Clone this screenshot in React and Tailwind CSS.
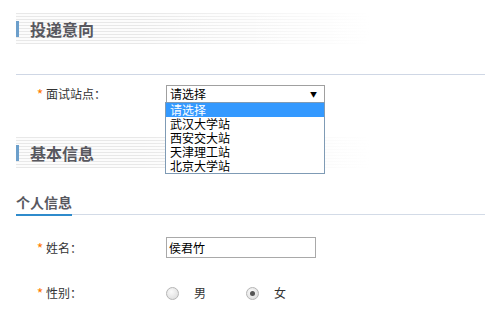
import React from "react";

const stripes =
  "bg-[linear-gradient(to_right,rgba(255,255,255,0)_35%,#fff_100%),repeating-linear-gradient(to_bottom,#e8e8e8_0px,#e8e8e8_1px,#fcfcfc_1px,#fcfcfc_3px)]";

const SectionTitle = ({ children }) => (
  <div className={`flex h-[31px] w-[355px] items-center ${stripes}`}>
    <span className="h-4 w-[3px] bg-[#6c9fcb]" />
    <span className="ml-[11px] text-base leading-none font-bold text-[#58585f]">
      {children}
    </span>
  </div>
);

const Label = ({ children }) => (
  <div className="flex w-[150px] items-center pl-[19px] text-xs text-[#333]">
    <span className="w-[10px] text-center text-sm leading-none text-[#ff7a00]">*</span>
    <span className="ml-px">{children}</span>
  </div>
);

const Radio = ({ checked }) => (
  <span className="flex h-[13px] w-[13px] items-center justify-center rounded-full border border-[#b5b5b5] bg-[radial-gradient(circle_at_40%_35%,#fafafa,#d8d8d8)]">
    {checked && <span className="h-[5px] w-[5px] rounded-full bg-[#555]" />}
  </span>
);

const options = ["请选择", "武汉大学站", "西安交大站", "天津理工站", "北京大学站"];

export default function App() {
  return (
    <div className="h-[321px] w-[485px] overflow-hidden bg-white pt-[13px] pl-4 font-['Noto_Sans_CJK_SC','Liberation_Sans',sans-serif]">
      {/* 投递意向 */}
      <SectionTitle>投递意向</SectionTitle>
      <div className="mt-[30px] h-px bg-[#cfd7e5]" />

      <div className="relative mt-[10px] flex h-[18px] items-center">
        <Label>面试站点：</Label>
        <div className="flex h-[18px] w-[159px] items-center justify-between border border-[#a0a0a0] pr-[7px] pl-[3px] text-xs text-black">
          <span>请选择</span>
          <span className="text-[7px] leading-none">▼</span>
        </div>

        {/* open dropdown */}
        <div className="absolute top-[17px] left-[149px] z-10 flex w-[160px] flex-col border border-[#7f9bb5] bg-white text-xs text-black">
          {options.map((o, i) => (
            <div
              key={o}
              className={`flex h-[14px] items-center pl-[4px] leading-[14px] ${i === 0 ? "bg-[#3399ff] text-white" : ""}`}
            >
              {o}
            </div>
          ))}
        </div>
      </div>

      {/* 基本信息 */}
      <div className="mt-[34px]">
        <SectionTitle>基本信息</SectionTitle>
      </div>

      <div className="mt-[24px] flex items-end">
        <span className="border-b-2 border-[#2f8bcc] pb-[2px] text-sm leading-[20px] font-bold text-[#58585f]">
          个人信息
        </span>
        <div className="mb-px flex-1 border-b border-[#d3dbe7]" />
      </div>

      <div className="mt-[21px] flex h-[21px] items-center">
        <Label>姓名：</Label>
        <div className="flex h-[21px] w-[150px] items-center border border-[#a9a9a9] pl-[2px] text-xs text-black">
          侯君竹
        </div>
      </div>

      <div className="mt-[25px] flex h-[20px] items-center">
        <Label>性别：</Label>
        <div className="flex items-center text-xs text-[#333]">
          <Radio />
          <span className="ml-[15px]">男</span>
          <span className="ml-[40px]">
            <Radio checked />
          </span>
          <span className="ml-[15px]">女</span>
        </div>
      </div>
    </div>
  );
}
